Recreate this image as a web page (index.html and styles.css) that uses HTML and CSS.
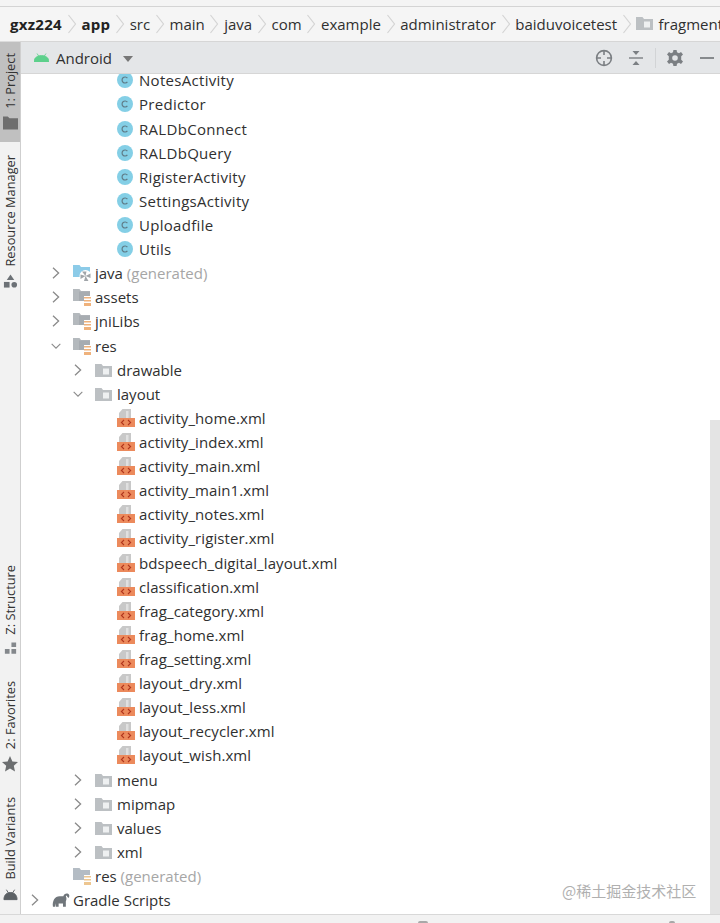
FILE: index.html
```html
<!DOCTYPE html>
<html lang="en">
<head>
<meta charset="utf-8">
<title>Android Studio project tree</title>
<link rel="stylesheet" href="styles.css">
</head>
<body>
<svg class="defs" width="0" height="0" aria-hidden="true">
  <symbol id="chev" viewBox="0 0 10 24"><path d="M1.5 3 L8.5 12 L1.5 21" fill="none" stroke="#d4d4d4" stroke-width="1.2"/></symbol>
  <symbol id="arrow-r" viewBox="0 0 10 12"><path d="M2 .8 L7.6 6 L2 11.2" fill="none" stroke="#8a8a8a" stroke-width="1.3"/></symbol>
  <symbol id="arrow-d" viewBox="0 0 12 10"><path d="M.8 2.4 L6 7.6 L11.2 2.4" fill="none" stroke="#8a8a8a" stroke-width="1.3"/></symbol>
  <symbol id="folder" viewBox="0 0 18 16"><path d="M0 2 H6.5 L8 4 H17 V15 H0 Z" fill="#bcc0c3"/><rect x="8" y="6.5" width="6" height="6" fill="#eef0f1"/></symbol>
  <symbol id="res" viewBox="0 0 18 18"><path d="M0 1 H6.5 L8 3 H17 V13 H0 Z" fill="#b4b9bd"/><path d="M6 3.6 H17 V8 H11 V13 H6 Z" fill="#a7acb1"/><rect x="11" y="8" width="7" height="10" fill="#fff"/><path d="M11 9 H18 V10.6 H11 Z M11 12 H18 V13.6 H11 Z M11 15 H18 V18 H11 Z" fill="#efb27c"/></symbol>
  <symbol id="resgen" viewBox="0 0 18 18"><path d="M0 1 H6.5 L8 3 H17 V13 H0 Z" fill="#b4bcc4"/><rect x="11" y="8" width="7" height="10" fill="#fff"/><path d="M11 9 H18 V10.6 H11 Z M11 12 H18 V13.6 H11 Z M11 15 H18 V18 H11 Z" fill="#edc690"/></symbol>
  <symbol id="javagen" viewBox="0 0 18 18"><path d="M0 1 H6.5 L8 3 H17 V13 H0 Z" fill="#8ccbe8"/><circle cx="12.5" cy="12" r="6" fill="#fff"/><path d="M12.5 12 L9 7.5 L13.5 7.5 Z M12.5 12 L17.5 9.5 L17.5 14 Z M12.5 12 L15.5 17 L11 17 Z M12.5 12 L7.5 15 L7.5 10.5 Z" fill="#a0a5a9"/></symbol>
  <symbol id="xmlfile" viewBox="0 0 18 18"><path d="M5.5 0 H14 V9 H2 V4 Z" fill="#c8c8c8"/><path d="M9 2 H11.5 V9 H9 Z" fill="#e0e0e0"/><rect x="0" y="9" width="18" height="9" fill="#ec8a5c"/><path d="M7 11 L4.4 13.5 L7 16 M11 11 L13.6 13.5 L11 16" fill="none" stroke="#b2361e" stroke-width="1.1"/></symbol>
  <symbol id="cls" viewBox="0 0 16 16"><circle cx="8" cy="8" r="8" fill="#84cfe6"/><path d="M10.4 6.1 A3 3 0 1 0 10.4 9.9" fill="none" stroke="#5f7c88" stroke-width="1.2"/></symbol>
  <symbol id="elephant" viewBox="0 0 19 16"><path d="M1 15 C0 9 3 4 8 4 H12 C12.6 1.6 15 .6 17 1.5 C18.6 2.3 18.6 4.4 17.6 5.8 L16 4.6 C16.2 3.6 15.2 3.2 14.6 3.9 C15.4 6 15.6 8 14.6 9.4 V15 H11.6 V11.6 H7 V15 H4 V11.4 L3.2 15 Z" fill="#70767b"/></symbol>
</svg>
<div class="app">
  <div class="strip"></div>
  <nav class="crumbs">
    <span class="crumb strong">gxz224</span><svg class="sep"><use href="#chev"/></svg>
    <span class="crumb strong">app</span><svg class="sep"><use href="#chev"/></svg>
    <span class="crumb">src</span><svg class="sep"><use href="#chev"/></svg>
    <span class="crumb">main</span><svg class="sep"><use href="#chev"/></svg>
    <span class="crumb">java</span><svg class="sep"><use href="#chev"/></svg>
    <span class="crumb">com</span><svg class="sep"><use href="#chev"/></svg>
    <span class="crumb">example</span><svg class="sep"><use href="#chev"/></svg>
    <span class="crumb">administrator</span><svg class="sep"><use href="#chev"/></svg>
    <span class="crumb">baiduvoicetest</span><svg class="sep"><use href="#chev"/></svg>
    <svg class="crumb-folder"><use href="#folder"/></svg>
    <span class="crumb">fragment</span>
  </nav>
  <div class="main">
    <aside class="side">
      <div class="tab tab-project">
        <span class="tab-label">1: Project</span>
        <svg class="tab-icon" viewBox="0 0 16 14"><path d="M0 0 H5 L7 2 H16 V14 H0 Z" fill="#6e6e6e"/></svg>
      </div>
      <div class="tab tab-resource">
        <span class="tab-label">Resource Manager</span>
        <svg class="tab-icon" viewBox="0 0 16 14"><path d="M8 0 L12 6 H4 Z" fill="#6c7176"/><rect x="1" y="8" width="6" height="6" fill="#6c7176"/><circle cx="12" cy="11" r="3" fill="#6c7176"/></svg>
      </div>
      <div class="tab tab-structure">
        <span class="tab-label">Z: Structure</span>
        <svg class="tab-icon" viewBox="0 0 16 14"><path d="M2 8 H7 V13 H2 Z M9 8 H14 V13 H9 Z M9 1 H14 V6 H9 Z" fill="#84888c"/></svg>
      </div>
      <div class="tab tab-favorites">
        <span class="tab-label">2: Favorites</span>
        <svg class="tab-icon star" viewBox="0 0 16 16"><path d="M8 0 L10.4 5.4 L16 6 L11.8 9.8 L13 15.6 L8 12.6 L3 15.6 L4.2 9.8 L0 6 L5.6 5.4 Z" fill="#6c6e70"/></svg>
      </div>
      <div class="tab tab-variants">
        <span class="tab-label">Build Variants</span>
        <svg class="tab-icon" viewBox="0 0 16 14"><path d="M1 13 C1 8 4 5.4 8 5.4 C12 5.4 15 8 15 13 Z M3.6 2.4 L5.6 5.6 M12.4 2.4 L10.4 5.6" fill="#5c6165" stroke="#5c6165"/></svg>
      </div>
    </aside>
    <section class="panel">
      <header class="toolbar">
        <svg class="android" viewBox="0 0 15 9"><path d="M0 9 C0 5 3 2.6 7.5 2.6 C12 2.6 15 5 15 9 Z M3 .5 L5 3.5 M12 .5 L10 3.5" fill="#5dd08c" stroke="#5dd08c" stroke-width=".8"/></svg>
        <span class="toolbar-title">Android</span>
        <span class="caret"></span>
        <span class="tools">
          <svg class="tool" viewBox="0 0 18 18"><circle cx="9" cy="9" r="7.4" fill="none" stroke="#7b7f83" stroke-width="1.6"/><path d="M9 1 V6 M9 12 V17 M1 9 H6 M12 9 H17" stroke="#7b7f83" stroke-width="1.6"/></svg>
          <svg class="tool" viewBox="0 0 18 18"><path d="M2 9 H16" stroke="#7b7f83" stroke-width="1.4"/><path d="M5.5 2 H12.5 L9 6 Z M5.5 16 H12.5 L9 12 Z" fill="#7b7f83"/></svg>
          <span class="tool-sep"></span>
          <svg class="tool" viewBox="0 0 18 18"><path d="M7.4 1 H10.6 L11 3.3 L13 4.2 L15 3 L17 5.6 L15.2 7.2 V10.8 L17 12.4 L15 15 L13 13.8 L11 14.7 L10.6 17 H7.4 L7 14.7 L5 13.8 L3 15 L1 12.4 L2.8 10.8 V7.2 L1 5.6 L3 3 L5 4.2 L7 3.3 Z" fill="#7b7f83"/><circle cx="9" cy="9" r="2.8" fill="#e4e6e8"/></svg>
          <svg class="tool" viewBox="0 0 18 18"><path d="M2 9 H16" stroke="#7b7f83" stroke-width="1.8"/></svg>
        </span>
      </header>
      <div class="tree">
        <div class="row d4 class-row"><svg class="cls"><use href="#cls"/></svg><span>NotesActivity</span></div>
        <div class="row d4 class-row"><svg class="cls"><use href="#cls"/></svg><span>Predictor</span></div>
        <div class="row d4 class-row"><svg class="cls"><use href="#cls"/></svg><span>RALDbConnect</span></div>
        <div class="row d4 class-row"><svg class="cls"><use href="#cls"/></svg><span>RALDbQuery</span></div>
        <div class="row d4 class-row"><svg class="cls"><use href="#cls"/></svg><span>RigisterActivity</span></div>
        <div class="row d4 class-row"><svg class="cls"><use href="#cls"/></svg><span>SettingsActivity</span></div>
        <div class="row d4 class-row"><svg class="cls"><use href="#cls"/></svg><span>Uploadfile</span></div>
        <div class="row d4 class-row"><svg class="cls"><use href="#cls"/></svg><span>Utils</span></div>
        <div class="row d2"><svg class="arrow"><use href="#arrow-r"/></svg><svg class="ico"><use href="#javagen"/></svg><span>java <em>(generated)</em></span></div>
        <div class="row d2"><svg class="arrow"><use href="#arrow-r"/></svg><svg class="ico"><use href="#res"/></svg><span>assets</span></div>
        <div class="row d2"><svg class="arrow"><use href="#arrow-r"/></svg><svg class="ico"><use href="#res"/></svg><span>jniLibs</span></div>
        <div class="row d2"><svg class="arrow"><use href="#arrow-d"/></svg><svg class="ico"><use href="#res"/></svg><span>res</span></div>
        <div class="row d3"><svg class="arrow"><use href="#arrow-r"/></svg><svg class="ico"><use href="#folder"/></svg><span>drawable</span></div>
        <div class="row d3"><svg class="arrow"><use href="#arrow-d"/></svg><svg class="ico"><use href="#folder"/></svg><span>layout</span></div>
        <div class="row d4 file-row"><svg class="ico"><use href="#xmlfile"/></svg><span>activity_home.xml</span></div>
        <div class="row d4 file-row"><svg class="ico"><use href="#xmlfile"/></svg><span>activity_index.xml</span></div>
        <div class="row d4 file-row"><svg class="ico"><use href="#xmlfile"/></svg><span>activity_main.xml</span></div>
        <div class="row d4 file-row"><svg class="ico"><use href="#xmlfile"/></svg><span>activity_main1.xml</span></div>
        <div class="row d4 file-row"><svg class="ico"><use href="#xmlfile"/></svg><span>activity_notes.xml</span></div>
        <div class="row d4 file-row"><svg class="ico"><use href="#xmlfile"/></svg><span>activity_rigister.xml</span></div>
        <div class="row d4 file-row"><svg class="ico"><use href="#xmlfile"/></svg><span>bdspeech_digital_layout.xml</span></div>
        <div class="row d4 file-row"><svg class="ico"><use href="#xmlfile"/></svg><span>classification.xml</span></div>
        <div class="row d4 file-row"><svg class="ico"><use href="#xmlfile"/></svg><span>frag_category.xml</span></div>
        <div class="row d4 file-row"><svg class="ico"><use href="#xmlfile"/></svg><span>frag_home.xml</span></div>
        <div class="row d4 file-row"><svg class="ico"><use href="#xmlfile"/></svg><span>frag_setting.xml</span></div>
        <div class="row d4 file-row"><svg class="ico"><use href="#xmlfile"/></svg><span>layout_dry.xml</span></div>
        <div class="row d4 file-row"><svg class="ico"><use href="#xmlfile"/></svg><span>layout_less.xml</span></div>
        <div class="row d4 file-row"><svg class="ico"><use href="#xmlfile"/></svg><span>layout_recycler.xml</span></div>
        <div class="row d4 file-row"><svg class="ico"><use href="#xmlfile"/></svg><span>layout_wish.xml</span></div>
        <div class="row d3"><svg class="arrow"><use href="#arrow-r"/></svg><svg class="ico"><use href="#folder"/></svg><span>menu</span></div>
        <div class="row d3"><svg class="arrow"><use href="#arrow-r"/></svg><svg class="ico"><use href="#folder"/></svg><span>mipmap</span></div>
        <div class="row d3"><svg class="arrow"><use href="#arrow-r"/></svg><svg class="ico"><use href="#folder"/></svg><span>values</span></div>
        <div class="row d3"><svg class="arrow"><use href="#arrow-r"/></svg><svg class="ico"><use href="#folder"/></svg><span>xml</span></div>
        <div class="row d2 noarrow"><svg class="ico"><use href="#resgen"/></svg><span>res <em>(generated)</em></span></div>
        <div class="row d1"><svg class="arrow"><use href="#arrow-r"/></svg><svg class="ico"><use href="#elephant"/></svg><span>Gradle Scripts</span></div>
        <div class="scrollbar"></div>
        <div class="watermark">@稀土掘金技术社区</div>
      </div>
    </section>
  </div>
  <div class="bottom"><span class="peek peek-a"></span><span class="peek peek-b"></span></div>
</div>
</body>
</html>
```
FILE: styles.css
```css
* { box-sizing: border-box; }
html, body { margin: 0; padding: 0; }
body { background: #fff; color: #303030; font-family: "Open Sans", "Noto Sans CJK SC", sans-serif; font-size: 15px; }
.defs { position: absolute; }
.app { width: 720px; height: 923px; display: flex; flex-direction: column; overflow: hidden; }
.strip { height: 7px; background: #f4f4f4; border-bottom: 1px solid #d4d4d4; flex: none; }
.crumbs { height: 34px; flex: none; background: #f5f5f5; display: flex; align-items: center; padding-left: 10px; white-space: nowrap; overflow: hidden; }
.crumb { flex: none; }
.strong { font-weight: 700; color: #222; letter-spacing: .3px; }
.sep { width: 10px; height: 24px; margin: 0 4.7px; flex: none; }
.crumb-folder { width: 18px; height: 16px; margin: 0 4px 2px 0; flex: none; }
.main { flex: 1; display: flex; min-height: 0; }
.side { width: 21px; flex: none; background: #f2f2f2; border-right: 1px solid #cfcfcf; border-top: 1px solid #dcdcdc; display: flex; flex-direction: column; align-items: stretch; }
.tab { display: flex; flex-direction: column; align-items: center; flex: none; }
.tab-label { writing-mode: vertical-rl; transform: rotate(180deg); font-size: 12.8px; line-height: 16px; color: #333; white-space: nowrap; }
.tab-icon { width: 15px; height: 14px; flex: none; margin-top: 7px; }
.star { height: 16px; width: 16px; }
.tab-project { background: #c0c0c0; height: 100px; padding-top: 11px; }
.tab-resource { padding-top: 13px; }
.tab-structure { margin-top: 277px; }
.tab-favorites { margin-top: 26px; }
.tab-variants { margin-top: 25px; }
.panel { flex: 1; min-width: 0; display: flex; flex-direction: column; }
.toolbar { height: 33px; flex: none; background: #e4e6e8; border-top: 1px solid #d6d6d6; border-bottom: 1px solid #d6d6d6; display: flex; align-items: center; padding-left: 13px; position: relative; z-index: 1; }
.android { width: 15px; height: 9px; margin-right: 7px; }
.toolbar-title { font-size: 15px; }
.caret { width: 0; height: 0; border-left: 5px solid transparent; border-right: 5px solid transparent; border-top: 6px solid #777; margin-left: 11px; margin-top: 2px; }
.tools { margin-left: auto; display: flex; align-items: center; gap: 14px; margin-right: 4px; }
.tool { width: 18px; height: 18px; flex: none; }
.tool-sep { width: 1px; height: 20px; background: #d2d4d6; margin: 0 -4px; }
.tree { flex: 1; margin-top: -5.7px; position: relative; background: #fff; overflow: hidden; min-height: 0; }
.row { height: 24.12px; display: flex; align-items: center; white-space: nowrap; }
.row em { font-style: normal; color: #a6a6a6; }
.class-row { letter-spacing: .3px; }
.file-row { letter-spacing: .08px; }
.d1 { padding-left: 9px; }
.d1 .ico { margin-right: 3px; }
.d2 { padding-left: 30px; }
.d3 { padding-left: 52px; }
.d4 { padding-left: 96px; }
.noarrow { padding-left: 52px; }
.arrow { width: 10px; height: 12px; margin-right: 12px; flex: none; }
.ico { width: 18px; height: 18px; margin-right: 4px; flex: none; }
.cls { width: 16px; height: 16px; margin: 0 6px 0 0; flex: none; }
.scrollbar { position: absolute; right: 0; top: 352px; bottom: 0; width: 10px; background: #e4e4e4; }
.watermark { position: absolute; left: 541px; top: 811px; font-family: "Noto Sans CJK SC", sans-serif; font-size: 15px; color: #b0b0b0; line-height: 24px; }
.bottom { height: 9px; flex: none; background: #f2f2f2; border-top: 1px solid #d8d8d8; position: relative; }
.peek { position: absolute; bottom: 0; height: 2px; background: #a8a8a8; border-radius: 6px 6px 0 0; }
.peek-a { left: 418px; width: 10px; }
.peek-b { left: 669px; width: 6px; }
```
